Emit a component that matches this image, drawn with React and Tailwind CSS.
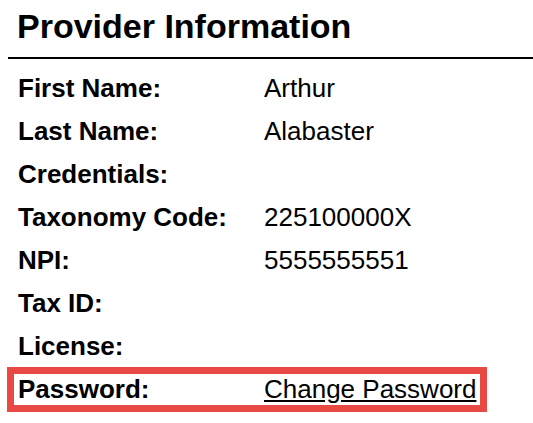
const rows = [
  { label: "First Name:", value: "Arthur" },
  { label: "Last Name:", value: "Alabaster" },
  { label: "Credentials:", value: "" },
  { label: "Taxonomy Code:", value: "225100000X" },
  { label: "NPI:", value: "5555555551" },
  { label: "Tax ID:", value: "" },
  { label: "License:", value: "" },
];

export default function App() {
  return (
    <div
      className="min-h-[423px] bg-white text-black pl-2 pt-[7px] overflow-hidden"
      style={{ fontFamily: '"Liberation Sans", Arial, sans-serif' }}
    >
      <h1 className="text-[34px] leading-[38px] font-bold pl-[9px] pb-3 border-b-2 border-black">
        Provider Information
      </h1>

      <div className="mt-2 pl-[10px] text-[26px] leading-[43px]">
        {rows.map((r) => (
          <div key={r.label} className="grid grid-cols-[246px_1fr] h-[43px]">
            <span className="font-bold">{r.label}</span>
            <span>{r.value}</span>
          </div>
        ))}

        <div className="relative grid grid-cols-[246px_1fr] h-[43px]">
          <span className="font-bold">Password:</span>
          <span>
            <a href="#" className="underline text-black">
              Change Password
            </a>
          </span>
          <div className="absolute -left-[11px] -top-px w-[480px] h-[45px] border-[7px] border-[#e84a43] pointer-events-none" />
        </div>
      </div>
    </div>
  );
}
